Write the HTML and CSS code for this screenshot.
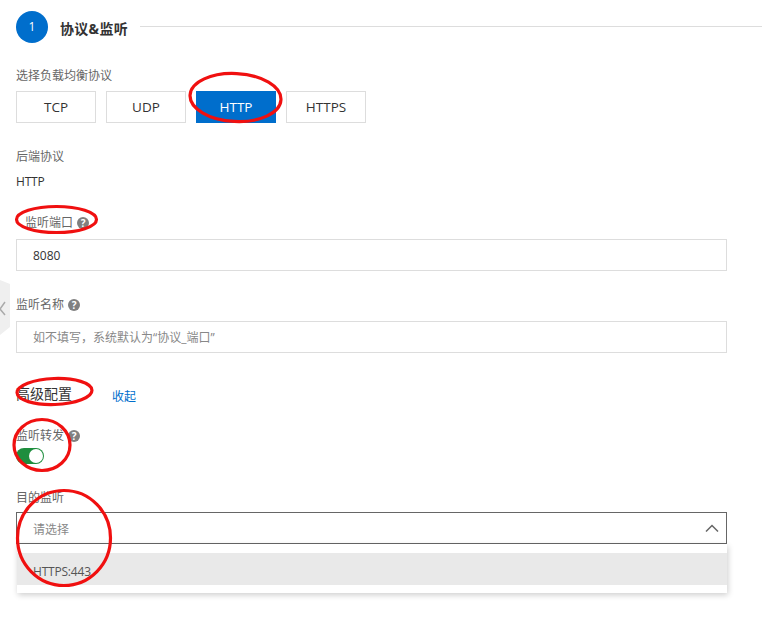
FILE: index.html
```html
<!DOCTYPE html>
<html lang="zh">
<head>
<meta charset="utf-8">
<title>协议&监听</title>
<link rel="stylesheet" href="styles.css">
</head>
<body>
<div class="page">
  <div class="side-tab">
    <svg width="11" height="56" viewBox="0 0 11 56"><path class="tab-bg" d="M0 0 10 4V47L0 55Z"/><path class="tab-chev" d="M5 22 0 29 5 35"/></svg>
  </div>
  <header class="step">
    <span class="step-num">1</span>
    <h2 class="step-title">协议&amp;监听</h2>
    <span class="step-line"></span>
  </header>
  <div class="label first">选择负载均衡协议</div>
  <div class="tabs">
    <button class="tab">TCP</button>
    <button class="tab">UDP</button>
    <button class="tab active">HTTP</button>
    <button class="tab">HTTPS</button>
  </div>
  <div class="label backend">后端协议</div>
  <div class="value">HTTP</div>
  <div class="label port">监听端口 <span class="help">?</span></div>
  <div class="field">8080</div>
  <div class="label name">监听名称 <span class="help">?</span></div>
  <div class="field placeholder">如不填写，系统默认为“协议_端口”</div>
  <div class="advanced">
    <span class="adv-title">高级配置</span>
    <a class="adv-link">收起</a>
  </div>
  <div class="label forward">监听转发 <span class="help">?</span></div>
  <div class="switch"><span class="knob"></span></div>
  <div class="label target">目的监听</div>
  <div class="select-wrap">
    <div class="field select placeholder">
      <span>请选择</span>
      <svg width="14" height="8" viewBox="0 0 14 8"><path d="M1 7.5 7 1.5 13 7.5"/></svg>
    </div>
    <div class="menu"><div class="option">HTTPS:443</div></div>
  </div>
  <svg class="marks" width="762" height="622" viewBox="0 0 762 622">
    <ellipse cx="235.5" cy="97.5" rx="45.5" ry="24" transform="rotate(3 235.5 97.5)"/>
    <ellipse cx="56.5" cy="219.5" rx="40" ry="13"/>
    <ellipse cx="54.5" cy="391.5" rx="37.5" ry="13" transform="rotate(-2 54.5 391.5)"/>
    <ellipse cx="42" cy="445" rx="28" ry="25.5"/>
    <ellipse cx="64" cy="538" rx="46.5" ry="47.5"/>
  </svg>
</div>
</body>
</html>
```
FILE: styles.css
```css
* { box-sizing: border-box; }
html, body { margin: 0; padding: 0; background: #fff; }
body { font-family: "Open Sans", "Noto Sans CJK SC", sans-serif; font-size: 12px; color: #333; }
.page { position: relative; width: 762px; height: 622px; padding: 11px 35px 0 16px; overflow: hidden; }
.side-tab { position: absolute; left: 0; top: 280px; line-height: 0; }
.tab-bg { fill: #efefef; }
.tab-chev { fill: none; stroke: #aaa; stroke-width: 1.5; }
.step { display: flex; align-items: flex-start; margin-right: -35px; height: 32px; }
.step-num { width: 32px; height: 32px; border-radius: 50%; background: #006ecc; color: #fff; font-size: 12px; line-height: 32px; text-align: center; flex: none; }
.step-title { margin: 8px 0 0 12px; font-size: 14px; line-height: 20px; font-weight: 700; letter-spacing: .3px; color: #333; white-space: nowrap; }
.step-line { flex: 1; height: 1px; margin: 15px 0 0 12px; background: #ddd; }
.label { font-size: 12px; line-height: 18px; color: #666; display: flex; align-items: center; gap: 4px; }
.first { margin-top: 24px; }
.tabs { display: flex; gap: 10px; margin-top: 6px; }
.tab { width: 80px; height: 32px; padding: 0; background: #fff; border: 1px solid #ddd; border-radius: 0; font: inherit; font-size: 13.5px; color: #333; }
.tab.active { background: #006ecc; border-color: #006ecc; color: #fff; }
.backend { margin-top: 25px; }
.value { margin-top: 7px; line-height: 18px; letter-spacing: -.2px; color: #333; }
.port { margin-top: 23px; padding-left: 9px; }
.name { margin-top: 25px; }
.field { height: 32px; margin-top: 7px; padding: 0 16px; border: 1px solid #ddd; line-height: 31px; color: #333; }
.placeholder { color: #888; }
.help { width: 12px; height: 12px; border-radius: 50%; background: #808080; color: #fff; font-size: 10px; font-weight: 700; line-height: 12px; text-align: center; }
.advanced { display: flex; align-items: center; margin-top: 30px; height: 22px; }
.adv-title { font-size: 14px; color: #333; width: 96px; margin-bottom: 3px; }
.adv-link { font-size: 12px; color: #006ecc; margin-top: 3px; }
.forward { margin-top: 22px; }
.switch { position: relative; width: 28px; height: 16px; margin-top: 3px; border-radius: 8px; background: #1e8e3e; }
.knob { position: absolute; right: 1px; top: 1px; width: 14px; height: 14px; border-radius: 50%; background: #fff; }
.target { margin-top: 25px; }
.select-wrap { position: relative; margin-top: 5px; }
.select { display: flex; align-items: center; justify-content: space-between; margin-top: 0; border-color: #666; padding-right: 7px; }
.select span { padding-top: 2px; }
.select svg { fill: none; stroke: #666; stroke-width: 1.5; }
.menu { position: absolute; left: 1px; right: 0; top: 32px; height: 49px; padding-top: 9px; background: #fff; box-shadow: 1px 2px 6px rgba(0,0,0,.2); }
.option { height: 32px; padding: 0 16px; line-height: 37px; letter-spacing: -.2px; background: #e9e9e9; color: #555; }
.marks { position: absolute; left: 0; top: 0; pointer-events: none; }
.marks ellipse { fill: none; stroke: #f01010; stroke-width: 3.2; }
```
